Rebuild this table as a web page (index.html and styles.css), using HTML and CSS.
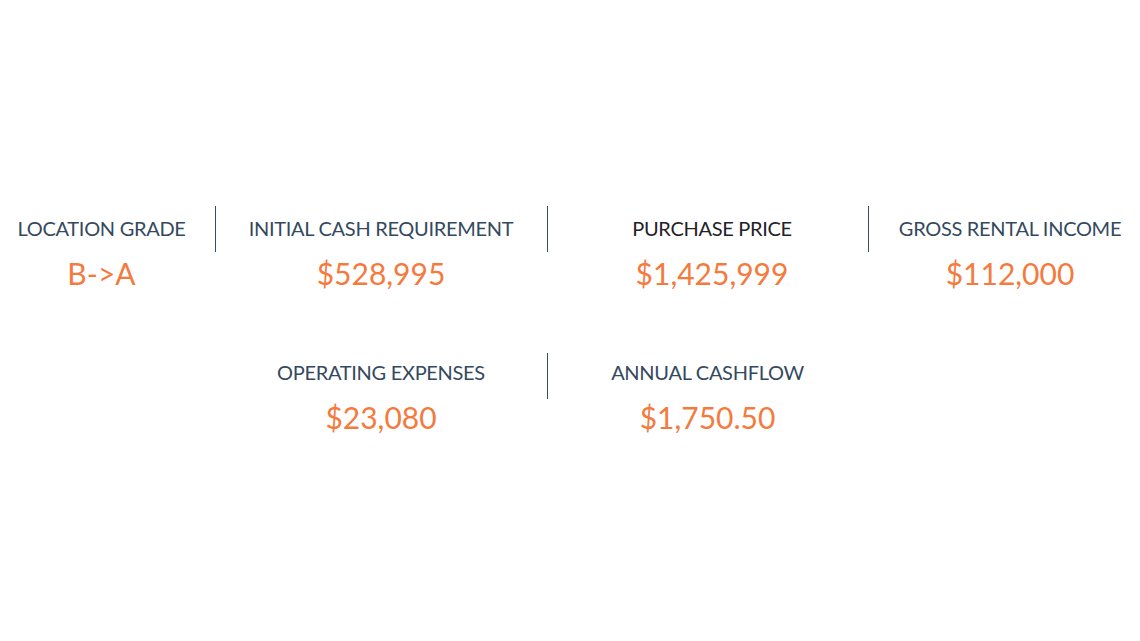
FILE: index.html
```html
<!DOCTYPE html>
<html>
<head>
<meta charset="utf-8">
<link rel="stylesheet" href="styles.css">
</head>
<body>
<main class="stats">
  <div class="row">
    <div class="stat c1"><div class="label">LOCATION GRADE</div><div class="value">B-&gt;A</div></div>
    <div class="stat c2 div"><div class="label">INITIAL CASH REQUIREMENT</div><div class="value">$528,995</div></div>
    <div class="stat c3 div"><div class="label dark">PURCHASE PRICE</div><div class="value">$1,425,999</div></div>
    <div class="stat c4 div"><div class="label">GROSS RENTAL INCOME</div><div class="value">$112,000</div></div>
  </div>
  <div class="row row2">
    <div class="stat c1 empty"></div>
    <div class="stat c2"><div class="label">OPERATING EXPENSES</div><div class="value">$23,080</div></div>
    <div class="stat c3 div"><div class="label">ANNUAL CASHFLOW</div><div class="value">$1,750.50</div></div>
    <div class="stat c4 empty"></div>
  </div>
</main>
</body>
</html>
```
FILE: styles.css
```css
html, body { margin: 0; padding: 0; background: #fff; }
body { width: 1140px; height: 641px; overflow: hidden; font-family: "Lato", "Open Sans", sans-serif; }
.stats { padding-top: 206px; }
.row { display: grid; grid-template-columns: 215px 332px 321px 272px; }
.row2 { margin-top: 62px; }
.stat { position: relative; text-align: center; }
.stat.div::before { content: ""; position: absolute; left: 0; top: 0; width: 1px; height: 46px; background: #3c4d60; }
.c1 { padding-right: 12px; }
.c3 { padding-left: 9px; }
.row2 .c3 { padding-left: 0; }
.c4 { padding-left: 12px; }
.label { font-size: 20px; line-height: 24px; padding-top: 10px; color: #34495e; letter-spacing: -0.3px; }
.row2 .label { padding-top: 7px; }
.label.dark { color: #1f2328; }
.value { font-size: 30px; line-height: 36px; margin-top: 15px; color: #f47a3e; }
```
